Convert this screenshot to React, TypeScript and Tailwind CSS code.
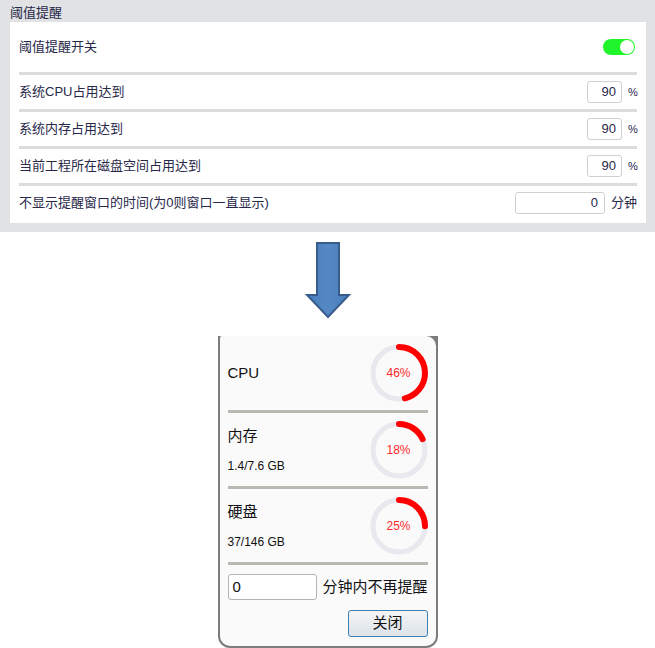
const font = { fontFamily: '"Liberation Sans", "Noto Sans CJK SC", sans-serif' };

function Sep() {
  return <div className="h-[3px] bg-[#dcdcdc]" />;
}

function PercentRow({ label }: { label: string }) {
  return (
    <div className="flex h-[34px] items-center justify-between">
      <span>{label}</span>
      <div className="flex items-center">
        <div className="flex h-[22px] w-[35px] items-center justify-end rounded-[3px] border border-[#d0d0d0] bg-white pr-[5px]">90</div>
        <span className="ml-[6px] w-[9px] text-[11px]">%</span>
      </div>
    </div>
  );
}

function Ring({ pct }: { pct: number }) {
  const c = 2 * Math.PI * 26;
  return (
    <div className="relative h-[58px] w-[58px]">
      <svg width="58" height="58" viewBox="0 0 58 58">
        <circle cx="29" cy="29" r="26" fill="none" stroke="#e8e8ee" strokeWidth="5" />
        <circle
          cx="29"
          cy="29"
          r="26"
          fill="none"
          stroke="#ff0000"
          strokeWidth="6"
          strokeLinecap="round"
          strokeDasharray={`${(c * pct) / 100} ${c}`}
          transform="rotate(-90 29 29)"
        />
      </svg>
      <span className="absolute inset-0 flex items-center justify-center text-[12px] text-[#ff2a2a]">{pct}%</span>
    </div>
  );
}

function StatRow({ title, sub, pct, h }: { title: string; sub?: string; pct: number; h: string }) {
  return (
    <div className={`flex items-center justify-between ${h}`}>
      <div className="flex flex-col">
        <span className="text-[15px] leading-[20px]">{title}</span>
        {sub && <span className="mt-[12px] text-[12px] leading-[16px]">{sub}</span>}
      </div>
      <Ring pct={pct} />
    </div>
  );
}

export default function App() {
  return (
    <div className="h-[648px] w-[655px] overflow-hidden bg-white" style={font}>
      <div className="h-[232px] bg-[#e1e2e4] text-[13px] text-[#28284a]">
        <div className="flex h-[22px] items-end pl-[10px] leading-[18px]">阈值提醒</div>
        <div className="ml-[10px] w-[636px] bg-white px-[9px] pb-[3px]">
          <div className="flex h-[50px] items-center justify-between">
            <span>阈值提醒开关</span>
            <div className="mr-[2px] flex h-[16px] w-[32px] items-center justify-end rounded-full bg-[#1ff52a] pr-[1px]">
              <div className="h-[14px] w-[14px] rounded-full bg-white" />
            </div>
          </div>
          <Sep />
          <PercentRow label="系统CPU占用达到" />
          <Sep />
          <PercentRow label="系统内存占用达到" />
          <Sep />
          <PercentRow label="当前工程所在磁盘空间占用达到" />
          <Sep />
          <div className="flex h-[34px] items-center justify-between">
            <span>不显示提醒窗口的时间(为0则窗口一直显示)</span>
            <div className="flex items-center">
              <div className="flex h-[22px] w-[90px] items-center justify-end rounded-[3px] border border-[#d0d0d0] bg-white pr-[6px]">0</div>
              <span className="ml-[6px]">分钟</span>
            </div>
          </div>
        </div>
      </div>

      <div className="flex h-[104px] justify-center pt-[10px]">
        <svg width="46" height="78" viewBox="0 0 46 78">
          <defs>
            <linearGradient id="ag" x1="0" y1="0" x2="1" y2="0">
              <stop offset="0" stopColor="#4a7dbb" />
              <stop offset="0.5" stopColor="#5688c6" />
              <stop offset="1" stopColor="#4a7dbb" />
            </linearGradient>
          </defs>
          <path d="M12 1 H34 V53 H44 L23 75 L2 53 H12 Z" fill="url(#ag)" stroke="#385d8a" strokeWidth="2" strokeLinejoin="miter" />
        </svg>
      </div>

      <div className="mx-auto flex h-[312px] w-[220px] rounded-b-[12px] bg-[#7c7c7c] px-[2px] pb-[2px]">
        <div className="flex w-full flex-col rounded-tl-[2px] rounded-tr-[10px] rounded-b-[10px] bg-[#fafafa] pl-[8px] pr-[8px] text-[#111]">
          <StatRow title="CPU" pct={46} h="h-[74px]" />
          <div className="h-[3px] bg-[#b9b9b1]" />
          <StatRow title="内存" sub="1.4/7.6 GB" pct={18} h="h-[73px]" />
          <div className="h-[3px] bg-[#b9b9b1]" />
          <StatRow title="硬盘" sub="37/146 GB" pct={25} h="h-[73px]" />
          <div className="h-[3px] bg-[#b9b9b1]" />
          <div className="mt-[9px] flex items-center">
            <div className="flex h-[26px] w-[89px] items-center rounded-[3px] border border-[#b4b4b4] bg-white pl-[4px] text-[15px]">0</div>
            <span className="ml-[6px] text-[15px]">分钟内不再提醒</span>
          </div>
          <div className="mt-[10px] flex justify-end">
            <div className="flex h-[27px] w-[80px] items-center justify-center rounded-[3px] border border-[#3c7fb1] bg-gradient-to-b from-[#f4f4f4] to-[#dde3ea] text-[15px]">关闭</div>
          </div>
        </div>
      </div>
    </div>
  );
}
